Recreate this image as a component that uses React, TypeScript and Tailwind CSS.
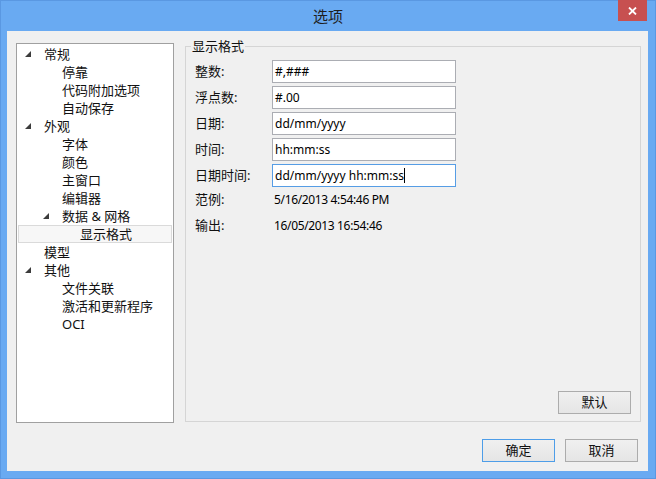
import React from "react";

type Node = { label: string; level: number; expanded?: boolean; selected?: boolean };

const tree: Node[] = [
  { label: "常规", level: 0, expanded: true },
  { label: "停靠", level: 1 },
  { label: "代码附加选项", level: 1 },
  { label: "自动保存", level: 1 },
  { label: "外观", level: 0, expanded: true },
  { label: "字体", level: 1 },
  { label: "颜色", level: 1 },
  { label: "主窗口", level: 1 },
  { label: "编辑器", level: 1 },
  { label: "数据 & 网格", level: 1, expanded: true },
  { label: "显示格式", level: 2, selected: true },
  { label: "模型", level: 0 },
  { label: "其他", level: 0, expanded: true },
  { label: "文件关联", level: 1 },
  { label: "激活和更新程序", level: 1 },
  { label: "OCI", level: 1 },
];

const padByLevel = ["pl-[6px]", "pl-[24px]", "pl-[42px]"];

function Tri() {
  return (
    <svg width="6" height="6" viewBox="0 0 6 6" className="block">
      <polygon points="6,0 6,6 0,6" fill="#3c3c3c" />
    </svg>
  );
}

function TreeRow({ n }: { n: Node }) {
  return (
    <div
      className={
        "flex items-center h-[18px] mx-[1px] " +
        padByLevel[n.level] +
        (n.selected ? " bg-[#f7f7f7] border border-[#dadada]" : " border border-transparent")
      }
    >
      <span className="w-[19px] flex items-center">{n.expanded ? <Tri /> : null}</span>
      <span className="text-[13px] leading-[16px] text-[#111] whitespace-nowrap">{n.label}</span>
    </div>
  );
}

function Field({ label, value, focused }: { label: string; value: string; focused?: boolean }) {
  return (
    <div className="flex items-center h-[23px] mb-[3px]">
      <span className="w-[77px] text-[13px] text-[#111]">{label}</span>
      <div
        className={
          "w-[184px] h-[23px] bg-white border flex items-center pl-[2px] text-[12px] text-black " +
          (focused ? "border-[#569de5]" : "border-[#abadb3]")
        }
      >
        <span className="font-['Noto_Sans',sans-serif]">{value}</span>
        {focused ? <span className="w-[1px] h-[15px] bg-black" /> : null}
      </div>
    </div>
  );
}

function TextRow({ label, value }: { label: string; value: string }) {
  return (
    <div className="flex items-center h-[26px]">
      <span className="w-[79px] text-[13px] text-[#111]">{label}</span>
      <span className="text-[12px] tracking-[-0.35px] text-black font-['Noto_Sans',sans-serif]">{value}</span>
    </div>
  );
}

function Btn({ children, primary }: { children: React.ReactNode; primary?: boolean }) {
  return (
    <div
      className={
        "w-[73px] h-[23px] flex items-center justify-center text-[13px] text-[#111] bg-linear-to-b from-[#f0f0f0] to-[#e5e5e5] border " +
        (primary ? "border-[#4d9de8]" : "border-[#acacac]")
      }
    >
      {children}
    </div>
  );
}

export default function App() {
  return (
    <div className="w-[656px] h-[479px] bg-[#69aaf2] border border-[#5a98e2] flex flex-col font-['Noto_Sans','Noto_Sans_CJK_SC',sans-serif]">
      <div className="relative h-[30px] flex items-center justify-center">
        <span className="text-[15px] text-[#1e1e1e] leading-none">选项</span>
        <div className="absolute left-[617px] top-[-1px] w-[29px] h-[21px] bg-[#c75050] flex items-center justify-center">
          <svg width="9" height="8" viewBox="0 0 9 8">
            <path d="M1 0.5 L8 7.5 M8 0.5 L1 7.5" stroke="white" strokeWidth="1.8" />
          </svg>
        </div>
      </div>
      <div className="ml-[6px] mr-[7px] mb-[7px] flex-1 bg-[#f0f0f0] flex flex-col">
        <div className="flex items-start pt-[7px]">
          <div className="ml-[9px] mt-[5px] w-[158px] h-[380px] bg-white border border-[#a0a0a0] pt-[1px]">
            {tree.map((n, i) => (
              <TreeRow key={i} n={n} />
            ))}
          </div>
          <fieldset className="ml-[11px] w-[456px] h-[384px] border border-[#d5d5d5] flex flex-col">
            <legend className="ml-[5px] px-[1px] h-[16px] leading-[16px] text-[13px] text-[#111]">显示格式</legend>
            <div className="flex flex-col pt-[6px] pl-[9px] flex-1">
              <Field label="整数:" value="#,###" />
              <Field label="浮点数:" value="#.00" />
              <Field label="日期:" value="dd/mm/yyyy" />
              <Field label="时间:" value="hh:mm:ss" />
              <Field label="日期时间:" value="dd/mm/yyyy hh:mm:ss" focused />
              <div className="-mt-[3px]">
                <TextRow label="范例:" value="5/16/2013 4:54:46 PM" />
                <TextRow label="输出:" value="16/05/2013 16:54:46" />
              </div>
              <div className="mt-auto self-end mr-[9px] mb-[7px]">
                <Btn>默认</Btn>
              </div>
            </div>
          </fieldset>
        </div>
        <div className="mt-auto flex justify-end gap-[10px] pr-[10px] pb-[9px]">
          <Btn primary>确定</Btn>
          <Btn>取消</Btn>
        </div>
      </div>
    </div>
  );
}
